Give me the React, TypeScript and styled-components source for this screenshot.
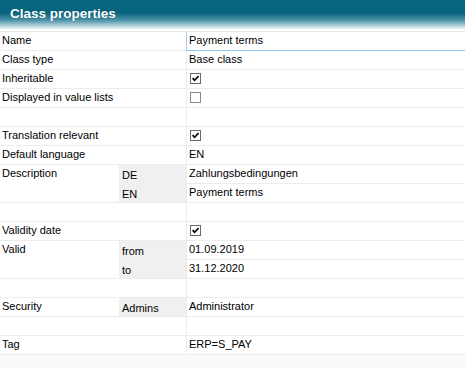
import styled, { createGlobalStyle } from 'styled-components'

const GlobalStyle = createGlobalStyle`
    html, body, #root {
        height: 100%;
    }
    body {
        margin: 0;
        background: #ffffff;
        font-family: 'Liberation Sans', Arial, sans-serif;
    }
`

const Panel = styled.div`
    display: flex;
    flex-direction: column;
    height: 100vh;
    overflow: hidden;
`

const Header = styled.div`
    height: 32px;
    box-sizing: border-box;
    padding: 6px 0 0 10px;
    background: linear-gradient(180deg,
        #08657f 0px,
        #08657f 13px,
        #4a90a5 20px,
        #b7d4dd 26px,
        #ffffff 30px
    );
    border-bottom: 1px solid #e6e6e6;
    color: #ffffff;
    font-weight: bold;
    font-size: 13.5px;
    line-height: 15px;
    text-shadow: 0 0 1px rgba(0, 40, 60, 0.5);
`

const Grid = styled.div`
    display: grid;
    grid-template-columns: 119px 67px 1fr;
    grid-auto-rows: 19px;
    font-size: 11px;
    color: #000000;
`

const Cell = styled.div`
    box-sizing: border-box;
    border-bottom: 1px solid #ececec;
    line-height: 17px;
    white-space: nowrap;
    overflow: hidden;
`

const LabelCell = styled(Cell)<{ $cols?: number; $rows?: number }>`
    grid-column: span ${p => p.$cols ?? 1};
    grid-row: span ${p => p.$rows ?? 1};
    padding-left: 2px;
`

const SubCell = styled(Cell)<{ $joined?: boolean }>`
    background: #f0f0f0;
    padding: 2px 0 0 3px;
    border-bottom-color: ${p => (p.$joined ? '#f0f0f0' : '#ececec')};
`

const ValueCell = styled(Cell)<{ $focused?: boolean }>`
    grid-column: 3;
    border-left: 1px solid ${p => (p.$focused ? '#a3d0f2' : '#ececec')};
    border-bottom-color: ${p => (p.$focused ? '#92c9f1' : '#ececec')};
    padding-left: 2px;
`

const Box = styled.span<{ $checked?: boolean }>`
    display: block;
    width: 11px;
    height: 11px;
    box-sizing: border-box;
    margin: 3px 0 0 1px;
    border: 1px solid ${p => (p.$checked ? '#6a6a6a' : '#8a8a8a')};
    background: #ffffff;

    svg {
        display: block;
    }
`

const Filler = styled.div`
    flex: 1;
    background: #fbf9f9;
`

function Checkbox({ checked }: { checked?: boolean }) {
    return (
        <Box $checked={checked}>
            {checked && (
                <svg width="9" height="9" viewBox="0 0 9 9">
                    <path d="M1.6 4.2 L3.6 6.3 L7.6 2" fill="none" stroke="#000" strokeWidth="1.7" />
                </svg>
            )}
        </Box>
    )
}

export default function App() {
    return (
        <Panel>
            <GlobalStyle />
            <Header>Class properties</Header>
            <Grid>
                <LabelCell $cols={2}>Name</LabelCell>
                <ValueCell $focused>Payment terms</ValueCell>

                <LabelCell $cols={2}>Class type</LabelCell>
                <ValueCell>Base class</ValueCell>

                <LabelCell $cols={2}>Inheritable</LabelCell>
                <ValueCell><Checkbox checked /></ValueCell>

                <LabelCell $cols={2}>Displayed in value lists</LabelCell>
                <ValueCell><Checkbox /></ValueCell>

                <LabelCell $cols={2} />
                <ValueCell />

                <LabelCell $cols={2}>Translation relevant</LabelCell>
                <ValueCell><Checkbox checked /></ValueCell>

                <LabelCell $cols={2}>Default language</LabelCell>
                <ValueCell>EN</ValueCell>

                <LabelCell $rows={2}>Description</LabelCell>
                <SubCell $joined>DE</SubCell>
                <ValueCell>Zahlungsbedingungen</ValueCell>
                <SubCell>EN</SubCell>
                <ValueCell>Payment terms</ValueCell>

                <LabelCell $cols={2} />
                <ValueCell />

                <LabelCell $cols={2}>Validity date</LabelCell>
                <ValueCell><Checkbox checked /></ValueCell>

                <LabelCell $rows={2}>Valid</LabelCell>
                <SubCell $joined>from</SubCell>
                <ValueCell>01.09.2019</ValueCell>
                <SubCell>to</SubCell>
                <ValueCell>31.12.2020</ValueCell>

                <LabelCell $cols={2} />
                <ValueCell />

                <LabelCell>Security</LabelCell>
                <SubCell>Admins</SubCell>
                <ValueCell>Administrator</ValueCell>

                <LabelCell $cols={2} />
                <ValueCell />

                <LabelCell $cols={2}>Tag</LabelCell>
                <ValueCell>ERP=S_PAY</ValueCell>
            </Grid>
            <Filler />
        </Panel>
    )
}
